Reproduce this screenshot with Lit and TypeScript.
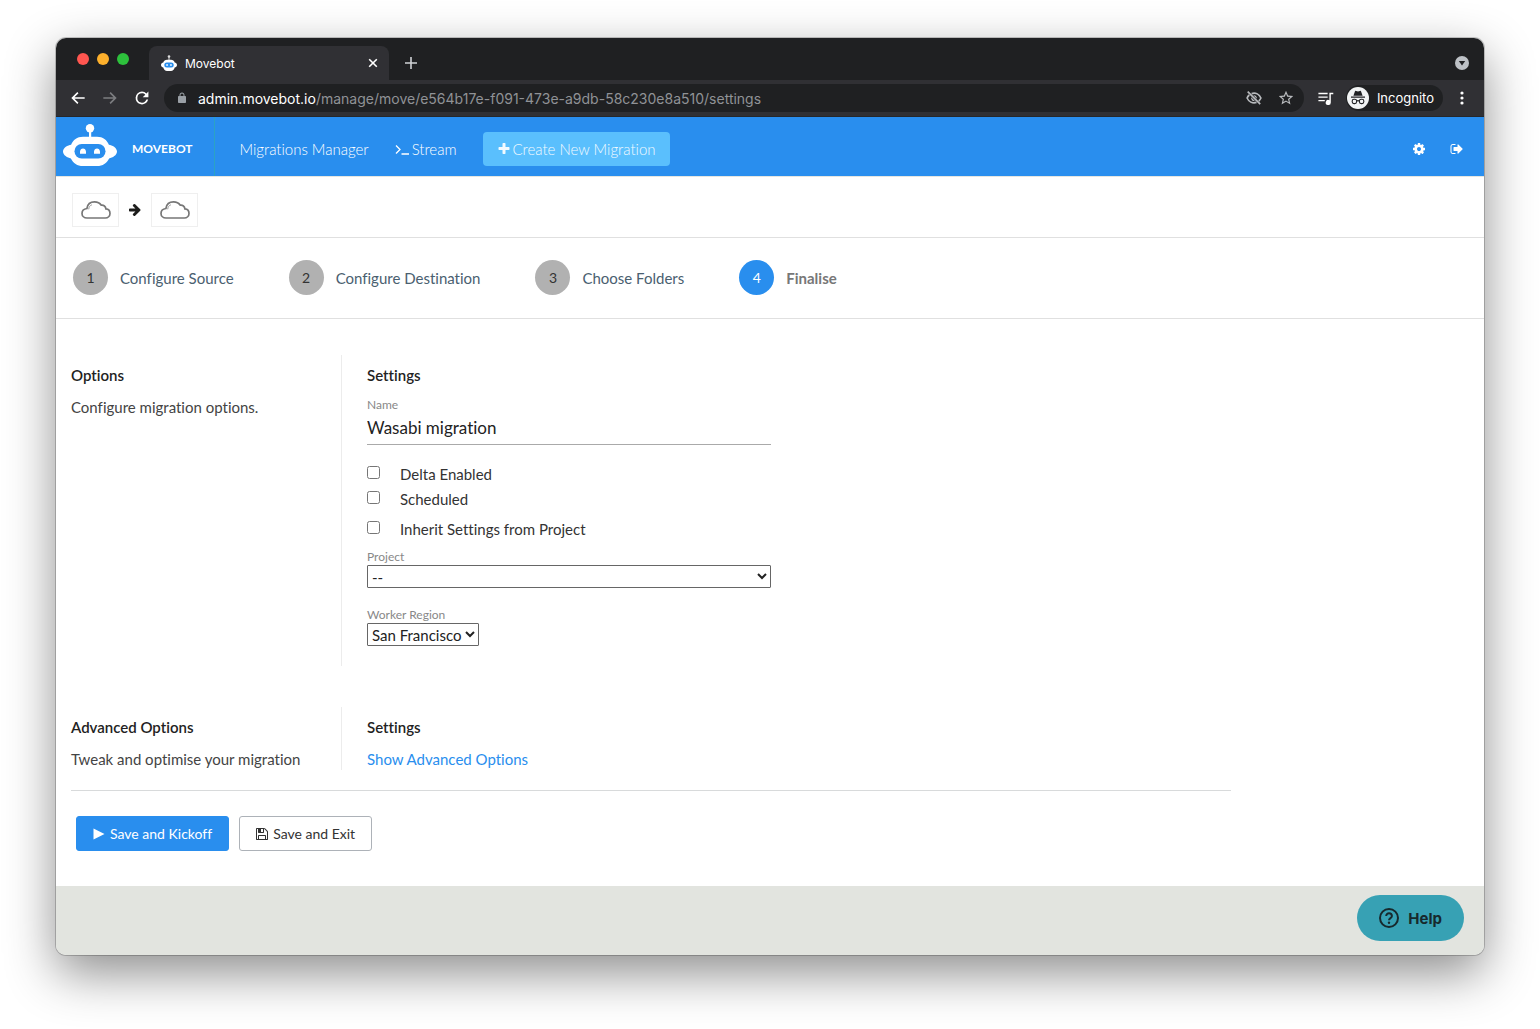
import { LitElement, html, css, svg } from "lit";
import { customElement, property } from "lit/decorators.js";

const icons: Record<string, { box: string; art: unknown }> = {
  back: {
    box: "0 0 24 24",
    art: svg`<path d="M22 10.700H6.700l6-6L11 3 2 12l9 9 1.700-1.700-6-6H22v-2.600z"/>`,
  },
  forward: {
    box: "0 0 24 24",
    art: svg`<path d="M2 10.700h15.300l-6-6L13 3l9 9-9 9-1.700-1.700 6-6H2v-2.600z"/>`,
  },
  reload: {
    box: "0 0 24 24",
    art: svg`<path d="M18.700 5.200A9.500 9.500 0 0 0 12 2.400a9.600 9.600 0 1 0 9.300 12h-2.700A7 7 0 1 1 12 5c1.900 0 3.600.8 4.900 2l-3.800 3.900h8.500V2.400l-2.900 2.800z"/>`,
  },
  lock: {
    box: "0 0 24 24",
    art: svg`<path d="M18 8h-1V6c0-2.76-2.24-5-5-5S7 3.24 7 6v2H6c-1.1 0-2 .9-2 2v10c0 1.1.9 2 2 2h12c1.1 0 2-.9 2-2V10c0-1.1-.9-2-2-2zM9 6a3 3 0 0 1 6 0v2H9V6z"/>`,
  },
  star: {
    box: "1 1 22 22",
    art: svg`<path d="M22 9.24l-7.19-.62L12 2 9.19 8.63 2 9.24l5.46 4.73L5.82 21 12 17.27 18.18 21l-1.63-7.03L22 9.24zM12 15.4l-3.76 2.27 1-4.28-3.32-2.88 4.38-.38L12 6.1l1.71 4.04 4.38.38-3.32 2.88 1 4.28L12 15.4z"/>`,
  },
  eyeoff: {
    box: "0 0 16 16",
    art: svg`<g fill="none" stroke="currentColor" stroke-width="1.700"><path d="M5.600 3.600C9.800 2.300 13.300 4.500 14.900 8c-.5 1.200-1.200 2.200-2.100 3M10.500 12.400C6.300 13.700 2.700 11.500 1.100 8c.5-1.200 1.300-2.200 2.200-3"/><path d="M1.700 1.700l12.500 12.500"/></g><path d="M7.300 5.200a3 3 0 0 1 3.500 3.500zM5.200 7.200a3 3 0 0 0 3.700 3.700z"/>`,
  },
  playlist: {
    box: "0 0 24 24",
    art: svg`<path d="M15 4H2v2h13V4zm0 5H2v2h13V9zM2 16h9v-2H2v2zM17.500 4v10.300a3.600 3.600 0 1 0 2 3.200V6H23V4z"/>`,
  },
  incognito: {
    box: "0 0 22 22",
    art: svg`<circle cx="11" cy="11" r="11" fill="#f1f3f4"/><path fill="#202124" d="M7.900 4.400c.2-.5.7-.7 1.200-.5l1.900.5 1.900-.5c.5-.2 1 0 1.200.5L15.600 8.700H6.400zM4 9.600h14v1.100H4z"/><g fill="none" stroke="#202124" stroke-width="1.100"><rect x="5.200" y="12.200" width="4.400" height="4.400" rx="1.800"/><rect x="12.400" y="12.200" width="4.400" height="4.400" rx="1.800"/><path d="M9.600 14.100q1.400-1 2.800 0"/></g>`,
  },
  more: {
    box: "0 0 16 16",
    art: svg`<circle cx="8" cy="3" r="1.600"/><circle cx="8" cy="8" r="1.600"/><circle cx="8" cy="13" r="1.600"/>`,
  },
  tabsearch: {
    box: "0 0 14 14",
    art: svg`<circle cx="7" cy="7" r="7" fill="#bdc1c6"/><path fill="#202124" d="M3.800 5h6.400L7 9.600z"/>`,
  },
  close: {
    box: "0 0 10 10",
    art: svg`<path fill="none" stroke="currentColor" stroke-width="1.600" d="M1.200 1.200l7.600 7.600M8.800 1.200L1.200 8.800"/>`,
  },
  add: {
    box: "0 0 12 12",
    art: svg`<path fill="none" stroke="currentColor" stroke-width="1.600" d="M6 0v12M0 6h12"/>`,
  },
  robot: {
    box: "0 0 54 42",
    art: svg`<path fill="#fff" d="M26 7h2.200v7H26z"/><circle cx="27" cy="4.200" r="4.200" fill="#fff"/><path fill="#fff" d="M20 12.700h14c6 0 9.900 3.200 11.900 8 3.100.4 8.100 3 8.100 6.800s-4.500 6.200-7.900 6.900C43.600 39 39.900 42 34 42H20C14.100 42 10.400 39 7.900 34.400 4.500 33.700 0 31.300 0 27.500s5-6.400 8.100-6.800c2-4.800 5.900-8 11.900-8z"/><rect x="11.500" y="20" width="31" height="14.500" rx="7.200" fill="#298eee"/><path fill="#fff" d="M17 29.700v-1.900c0-4.500 6-4.500 6 0v1.900zM31 29.700v-1.900c0-4.500 6-4.500 6 0v1.900z"/>`,
  },
  favicon: {
    box: "0 0 16 16",
    art: svg`<path fill="#fff" d="M7.600 2h.8v4h-.8z"/><circle cx="8" cy="1.500" r="1.300" fill="#ddd"/><path fill="#fff" d="M6 4.800h4c1.900 0 3.100 1 3.700 2.700 1.100.2 2.300 1 2.300 2.500s-1.200 2.300-2.300 2.500C13.100 14.800 11.900 16 10 16H6c-1.900 0-3.100-1.200-3.700-3.500C1.200 12.300 0 11.500 0 10s1.200-2.300 2.300-2.500C2.900 5.800 4.100 4.800 6 4.800z"/><rect x="3.300" y="7.400" width="9.400" height="5" rx="2.500" fill="#298eee"/><path fill="#fff" d="M5.200 9.200h1.700v1.500H5.200zM9.100 9.200h1.700v1.500H9.100z"/>`,
  },
  plus: {
    box: "0 0 1792 1792",
    art: svg`<path d="M1600 736v192q0 40-28 68t-68 28h-416v416q0 40-28 68t-68 28h-192q-40 0-68-28t-28-68v-416h-416q-40 0-68-28t-28-68v-192q0-40 28-68t68-28h416v-416q0-40 28-68t68-28h192q40 0 68 28t28 68v416h416q40 0 68 28t28 68z"/>`,
  },
  terminal: {
    box: "0 0 14 14",
    art: svg`<path fill="none" stroke="currentColor" stroke-width="1.300" d="M1 3.500L5 7.500 1 11.500M6.500 12H14"/>`,
  },
  cog: {
    box: "0 0 1792 1792",
    art: svg`<path d="M1152 896q0-106-75-181t-181-75-181 75-75 181 75 181 181 75 181-75 75-181zm512-109v222q0 12-8 23t-20 13l-185 28q-19 54-39 91 35 50 107 138 10 12 10 25t-9 23q-27 37-99 108t-94 71q-12 0-26-9l-138-108q-44 23-91 38-16 136-29 186-7 28-36 28h-222q-14 0-24.500-8.500t-11.500-21.500l-28-184q-49-16-90-37l-141 107q-10 9-25 9-14 0-25-11-126-114-165-168-7-10-7-23 0-12 8-23 15-21 51-66.500t54-70.500q-27-50-41-99l-183-27q-13-2-21-12.500t-8-23.500v-222q0-12 8-23t19-13l186-28q14-46 39-92-40-57-107-138-10-12-10-24 0-10 9-23 26-36 98.500-107.500t94.500-71.500q13 0 26 10l138 107q44-23 91-38 16-136 29-186 7-28 36-28h222q14 0 24.500 8.500t11.500 21.500l28 184q49 16 90 37l142-107q9-9 24-9 13 0 25 10 129 119 165 170 7 8 7 22 0 12-8 23-15 21-51 66.500t-54 70.500q26 50 41 98l183 28q13 2 21 12.500t8 23.500z"/>`,
  },
  signout: {
    box: "0 0 1792 1792",
    art: svg`<path d="M704 1440q0 4 1 20t.5 26.500-3 23.500-10 19.500-20.500 6.500h-320q-119 0-203.500-84.500t-84.500-203.500v-704q0-119 84.500-203.500t203.500-84.500h320q13 0 22.500 9.500t9.500 22.500q0 4 1 20t.5 26.500-3 23.500-10 19.500-20.500 6.500h-320q-66 0-113 47t-47 113v704q0 66 47 113t113 47h312l11.500 1 11.500 3 8 5.500 7 9 2 13.500zm928-544q0 26-19 45l-544 544q-19 19-45 19t-45-19-19-45v-288h-448q-26 0-45-19t-19-45v-384q0-26 19-45t45-19h448v-288q0-26 19-45t45-19 45 19l544 544q19 19 19 45z"/>`,
  },
  arrow: {
    box: "0 64 1792 1792",
    art: svg`<path d="M1600 960q0 54-37 91l-651 651q-39 37-91 37-51 0-90-37l-75-75q-38-38-38-91t38-91l293-293h-704q-52 0-84.500-37.500t-32.500-90.500v-128q0-53 32.500-90.500t84.500-37.500h704l-293-294q-38-36-38-90t38-90l75-75q38-38 90-38 53 0 91 38l651 651q37 35 37 90z"/>`,
  },
  floppy: {
    box: "128 128 1536 1536",
    art: svg`<path d="M512 1536h768v-384h-768v384zm896 0h128v-896q0-14-10-38.500t-20-34.500l-281-281q-10-10-34-20t-39-10v416q0 40-28 68t-68 28h-576q-40 0-68-28t-28-68v-416h-128v1280h128v-416q0-40 28-68t68-28h832q40 0 68 28t28 68v416zm-384-928v-320q0-13-9.500-22.500t-22.500-9.500h-192q-13 0-22.500 9.500t-9.500 22.500v320q0 13 9.500 22.500t22.500 9.500h192q13 0 22.500-9.500t9.500-22.500zm640 32v928q0 40-28 68t-68 28h-1344q-40 0-68-28t-28-68v-1344q0-40 28-68t68-28h928q40 0 88 20t76 48l280 280q28 28 48 76t20 88z"/>`,
  },
  play: { box: "0 0 11 12", art: svg`<path d="M0 .4v11.200L11 6z"/>` },
  cloud: {
    box: "0 0 30 18",
    art: svg`<path fill="none" stroke="#777" stroke-width="1.700" d="M6 17h18.300c2.600 0 4.700-1.900 4.700-4.500s-1.900-4.400-4.100-4.600c-.2-2.600-2.200-4-4.600-3.700C18.800 2 16.500.9 13.500.9 9 .9 6.500 3.500 5.900 7.500 3 7.900 1 9.800 1 12.400 1 15 3.100 17 6 17z"/><path fill="none" stroke="#999" d="M7.700 8.300c.2-2.400 1.300-3.900 3.200-4.500"/>`,
  },
  help: {
    box: "0 0 20 20",
    art: svg`<g fill="none" stroke="currentColor" stroke-width="2"><circle cx="10" cy="10" r="9"/><path d="M7.200 8c0-3.800 5.700-3.600 5.700 0 0 2.200-2.900 2.100-2.900 4.300"/></g><circle cx="10" cy="14.700" r="1.200"/>`,
  },
};

@customElement("ui-icon")
export class UiIcon extends LitElement {
  @property() name = "";
  static styles = css`
    :host { display: inline-block; flex: none; }
    svg { display: block; width: 100%; height: 100%; fill: currentColor; }
  `;
  render() {
    const icon = icons[this.name];
    return icon ? html`<svg viewBox=${icon.box} aria-hidden="true">${icon.art}</svg>` : null;
  }
}

@customElement("browser-bar")
export class BrowserBar extends LitElement {
  static styles = css`
    :host { display: block; background: #1f2022; color: #fff; font-family: Inter, Roboto, sans-serif; }
    button { border: 0; padding: 0; background: none; color: inherit; font: inherit; display: flex; align-items: center; }
    .strip { display: flex; align-items: flex-end; height: 42px; padding: 0 15px 0 21px; box-sizing: border-box; }
    .lights { display: flex; gap: 8px; padding-bottom: 15px; margin-right: 20px; }
    .light { width: 12px; height: 12px; border-radius: 50%; }
    .red { background: #ff5650; }
    .amber { background: #fdb02c; }
    .green { background: #2dc13c; }
    .tab { display: flex; align-items: center; flex: 0 1 240px; height: 34px; padding: 0 11px 0 12px; box-sizing: border-box; background: #303034; border-radius: 8px 8px 0 0; font-size: 12px; }
    .title { flex: 1; padding-left: 8px; }
    .favicon { width: 16px; height: 16px; }
    .x { width: 10px; height: 10px; }
    .new { align-self: flex-end; margin: 0 auto 11px 16px; color: #d0d2d6; }
    .new ui-icon { width: 12px; height: 12px; }
    .search { margin-bottom: 10px; }
    .search ui-icon { width: 14px; height: 14px; }
    .tools { display: flex; align-items: center; height: 37px; padding: 0 14px; box-sizing: border-box; background: #303034; border-bottom: 1px solid #26272a; }
    .nav { display: flex; gap: 16px; margin-right: 14px; }
    .nav ui-icon { width: 16px; height: 16px; }
    .off { color: #7c7d80; }
    .address { display: flex; align-items: center; flex: 1; height: 28px; padding: 0 10px 0 12px; border-radius: 14px; background: #1f2022; }
    .lock { width: 12px; height: 12px; color: #9aa0a6; }
    .url { flex: 1; margin-left: 10px; font-size: 14px; color: #909296; text-decoration: none; white-space: nowrap; overflow: hidden; }
    .host { color: #fff; }
    .actions { display: flex; gap: 16px; color: #b8babd; }
    .actions ui-icon { width: 16px; height: 16px; }
    .media { margin: 0 12px 0 13px; }
    .media ui-icon { width: 17px; height: 17px; }
    .profile { height: 26px; gap: 8px; padding: 0 9px 0 1px; border-radius: 14px; background: #1f2022; font-size: 13px; }
    .profile ui-icon { width: 22px; height: 22px; }
    .menu { margin-left: 11px; }
    .menu ui-icon { width: 16px; height: 16px; }
  `;
  render() {
    return html`
      <div class="strip">
        <div class="lights">
          <span class="light red"></span><span class="light amber"></span><span class="light green"></span>
        </div>
        <div class="tab">
          <ui-icon class="favicon" name="favicon"></ui-icon>
          <span class="title">Movebot</span>
          <button aria-label="Close tab"><ui-icon class="x" name="close"></ui-icon></button>
        </div>
        <button class="new" aria-label="New tab"><ui-icon name="add"></ui-icon></button>
        <button class="search" aria-label="Search tabs"><ui-icon name="tabsearch"></ui-icon></button>
      </div>
      <div class="tools">
        <div class="nav">
          <button aria-label="Back"><ui-icon name="back"></ui-icon></button>
          <button class="off" aria-label="Forward"><ui-icon name="forward"></ui-icon></button>
          <button aria-label="Reload"><ui-icon name="reload"></ui-icon></button>
        </div>
        <div class="address">
          <ui-icon class="lock" name="lock"></ui-icon>
          <a class="url" href="#"><span class="host">admin.movebot.io</span>/manage/move/e564b17e-f091-473e-a9db-58c230e8a510/settings</a>
          <div class="actions">
            <button aria-label="Cookies blocked"><ui-icon name="eyeoff"></ui-icon></button>
            <button aria-label="Bookmark"><ui-icon name="star"></ui-icon></button>
          </div>
        </div>
        <button class="media" aria-label="Media"><ui-icon name="playlist"></ui-icon></button>
        <button class="profile"><ui-icon name="incognito"></ui-icon>Incognito</button>
        <button class="menu" aria-label="Menu"><ui-icon name="more"></ui-icon></button>
      </div>
    `;
  }
}

@customElement("app-header")
export class AppHeader extends LitElement {
  static styles = css`
    :host { display: flex; align-items: stretch; height: 59px; background: #298eee; color: #fff; font-size: 15px; font-weight: 300; line-height: 18px; }
    a { color: inherit; text-decoration: none; display: flex; align-items: center; }
    .brand { gap: 15px; padding: 4px 21px 0 7px; border-right: 1px solid #2ba3c4; font-size: 12px; font-weight: 700; }
    .logo { width: 54px; height: 42px; margin-bottom: 8px; }
    nav { display: flex; align-items: center; flex: 1; gap: 26px; padding: 4px 20px 0 25px; }
    .stream { gap: 3px; }
    .terminal { width: 14px; height: 14px; }
    .create { display: flex; align-items: center; gap: 2px; height: 34px; padding: 0 14px; border: 0; border-radius: 4px; background: #5abffd; color: #f2faff; font: inherit; }
    .create ui-icon { width: 14px; height: 14px; }
    .tools { display: flex; gap: 24px; margin-left: auto; }
    .tools ui-icon { width: 14px; height: 14px; }
  `;
  render() {
    return html`
      <a class="brand" href="#"><ui-icon class="logo" name="robot"></ui-icon>MOVEBOT</a>
      <nav>
        <a href="#">Migrations Manager</a>
        <a class="stream" href="#"><ui-icon class="terminal" name="terminal"></ui-icon>Stream</a>
        <button class="create"><ui-icon name="plus"></ui-icon>Create New Migration</button>
        <div class="tools">
          <a href="#" aria-label="Settings"><ui-icon name="cog"></ui-icon></a>
          <a href="#" aria-label="Sign out"><ui-icon name="signout"></ui-icon></a>
        </div>
      </nav>
    `;
  }
}

@customElement("step-list")
export class StepList extends LitElement {
  @property({ type: Number }) current = 1;
  static styles = css`
    ol { display: flex; flex-wrap: wrap; gap: 55px; margin: 0; padding: 22px 17px 23px; list-style: none; border-bottom: 1px solid #e0e0e0; }
    a { display: flex; align-items: center; gap: 12px; color: #4a6070; text-decoration: none; font-size: 15px; line-height: 20px; }
    .num { display: grid; place-items: center; width: 35px; height: 35px; border-radius: 50%; background: #b1b1b1; color: #333; font-size: 14px; }
    .active { color: #777; font-weight: 700; }
    .active .num { background: #298eee; color: #fff; font-weight: 400; }
  `;
  render() {
    const steps = ["Configure Source", "Configure Destination", "Choose Folders", "Finalise"];
    return html`<ol>
      ${steps.map(
        (label, i) => html`<li>
          <a class=${i + 1 === this.current ? "active" : ""} href="#"><span class="num">${i + 1}</span>${label}</a>
        </li>`,
      )}
    </ol>`;
  }
}

@customElement("migration-form")
export class MigrationForm extends LitElement {
  static styles = css`
    :host { display: block; padding: 36px 15px 35px; font-size: 15px; line-height: 20px; color: #444; }
    section { display: grid; grid-template-columns: 271px minmax(0, 430px); margin-bottom: 41px; }
    .about { padding-top: 10px; border-right: 1px solid #ececec; }
    .fields { padding: 10px 1px 20px 25px; }
    .advanced { margin-bottom: 20px; }
    .advanced .fields { padding-bottom: 1px; }
    h2 { margin: 0 0 12px; font-size: 15px; line-height: 20px; font-weight: 600; color: #222; }
    p { margin: 0; }
    .caption { display: block; font-size: 12px; line-height: 16px; color: #888; }
    .name { display: block; width: 100%; height: 32px; box-sizing: border-box; margin-bottom: 19px; padding: 0 0 2px; border: 0; border-bottom: 1px solid #aaa; border-radius: 0; background: none; font: inherit; font-size: 17px; color: #222; outline: none; }
    .check { display: flex; gap: 20px; margin-bottom: 5px; color: #333; }
    .check input { flex: none; width: 13px; height: 13px; margin: 2px 0 0; }
    .group { margin-bottom: 10px; }
    select { display: block; height: 23px; padding: 0; border: 1px solid #666; border-radius: 1px; background: #fff; color: #222; font: inherit; }
    .wide { width: 100%; margin-bottom: 19px; }
    .link { color: #298eee; text-decoration: none; }
    .actions { display: flex; gap: 10px; max-width: 1160px; box-sizing: border-box; padding: 25px 5px 0; border-top: 1px solid #d8dadb; }
    .actions button { display: flex; align-items: center; gap: 5px; height: 35px; padding: 0 16px; border: 1px solid #298eee; border-radius: 3px; background: #298eee; color: #fff; font: inherit; font-size: 14px; }
    .actions .plain { border-color: #adb2b8; background: #fff; color: #333; }
    .actions ui-icon { width: 12px; height: 12px; }
  `;
  render() {
    return html`
      <section>
        <div class="about">
          <h2>Options</h2>
          <p>Configure migration options.</p>
        </div>
        <div class="fields">
          <h2>Settings</h2>
          <label class="caption" for="name">Name</label>
          <input class="name" id="name" type="text" value="Wasabi migration" />
          <label class="check"><input type="checkbox" />Delta Enabled</label>
          <label class="check group"><input type="checkbox" />Scheduled</label>
          <label class="check group"><input type="checkbox" />Inherit Settings from Project</label>
          <label class="caption" for="project">Project</label>
          <select class="wide" id="project"><option>--</option></select>
          <label class="caption" for="region">Worker Region</label>
          <select id="region"><option>San Francisco</option></select>
        </div>
      </section>
      <section class="advanced">
        <div class="about">
          <h2>Advanced Options</h2>
          <p>Tweak and optimise your migration</p>
        </div>
        <div class="fields">
          <h2>Settings</h2>
          <a class="link" href="#">Show Advanced Options</a>
        </div>
      </section>
      <div class="actions">
        <button><ui-icon name="play"></ui-icon>Save and Kickoff</button>
        <button class="plain"><ui-icon name="floppy"></ui-icon>Save and Exit</button>
      </div>
    `;
  }
}

@customElement("app-root")
export class AppRoot extends LitElement {
  static styles = css`
    :host { display: flex; box-sizing: border-box; min-height: 100vh; padding: 38px 56px 74px; background: #fff; font-family: Lato, "Open Sans", sans-serif; font-variant-ligatures: no-common-ligatures; }
    .window { display: flex; flex-direction: column; flex: 1; min-width: 0; border-radius: 10px; overflow: hidden; background: #fff; box-shadow: 0 0 0 1px rgba(0, 0, 0, 0.2), 0 18px 50px rgba(0, 0, 0, 0.45); }
    .route { display: flex; align-items: center; gap: 9px; padding: 16px 16px 10px; border-top: 1px solid #e4e6e2; border-bottom: 1px solid #e0e0e0; }
    .cloud { display: grid; place-items: center; width: 45px; height: 32px; border: 1px solid #efefef; }
    .cloud ui-icon { width: 30px; height: 18px; }
    .arrow { width: 14px; height: 14px; color: #1d1d1b; }
    .page { flex: 1; }
    footer { display: flex; justify-content: flex-end; padding: 9px 20px 14px; background: #e2e4df; }
    .help { display: flex; align-items: center; gap: 9px; height: 46px; padding: 0 22px; border: 0; border-radius: 23px; background: #37a1b4; color: #17292d; font-family: Inter, sans-serif; font-size: 15px; font-weight: 700; }
    .help ui-icon { width: 20px; height: 20px; }
  `;
  render() {
    return html`
      <div class="window">
        <browser-bar></browser-bar>
        <app-header></app-header>
        <div class="route">
          <span class="cloud"><ui-icon name="cloud"></ui-icon></span>
          <ui-icon class="arrow" name="arrow"></ui-icon>
          <span class="cloud"><ui-icon name="cloud"></ui-icon></span>
        </div>
        <step-list current="4"></step-list>
        <main class="page"><migration-form></migration-form></main>
        <footer>
          <button class="help"><ui-icon name="help"></ui-icon>Help</button>
        </footer>
      </div>
    `;
  }
}
